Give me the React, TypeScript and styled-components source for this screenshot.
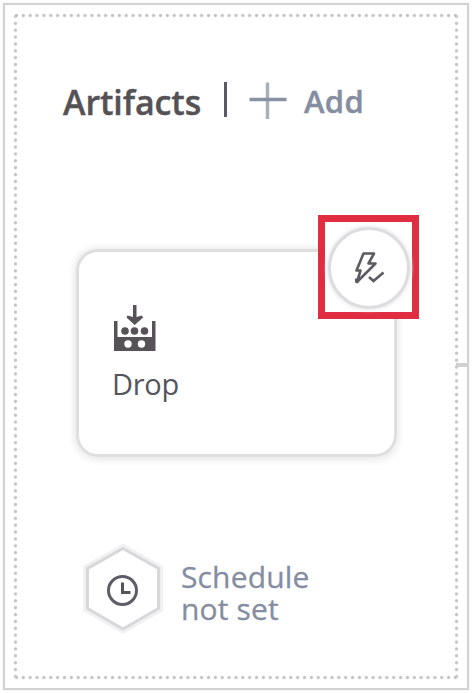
import React from "react";
import styled, { createGlobalStyle } from "styled-components";

const GlobalStyle = createGlobalStyle`
  *, *::before, *::after { box-sizing: border-box; }
  html, body { margin: 0; background: #fff; }
  body { font-family: "Open Sans", "Noto Sans", sans-serif; overflow: hidden; }
  svg { display: block; flex: none; }
`;

const Page = styled.main`
  width: 472px;
  height: 693px;
  padding: 3px;
  background: #fff;
`;

const Frame = styled.section`
  width: 466px;
  height: 687px;
  padding: 8px;
  border: 2px solid #d2d2d5;
  box-shadow: 0 0 2px #e6e6e8;
`;

const dot = "radial-gradient(circle at center, #c4c4c4 0 1px, #dcdcdc 1.6px, transparent 2.2px)";

const DottedPanel = styled.div`
  position: relative;
  width: 446px;
  height: 667px;
  padding: 69px 0 0 50px;
  background-image: ${dot}, ${dot}, ${dot}, ${dot};
  background-size: 6.9px 5px, 6.9px 5px, 5px 6.9px, 5px 6.9px;
  background-position: 0 0, 0 100%, 0 0, 100% 0;
  background-repeat: round no-repeat, round no-repeat, no-repeat round, no-repeat round;
`;

const Connector = styled.span`
  position: absolute;
  top: 350px;
  right: -8px;
  width: 11px;
  height: 4px;
  background: #d0d0d3;
`;

const Header = styled.header`
  display: flex;
  align-items: flex-start;
  height: 50px;
`;

const Title = styled.h1`
  width: 161px;
  margin: 0;
  font-size: 34px;
  line-height: 40px;
  font-weight: 600;
  letter-spacing: -0.1px;
  color: #555256;
  -webkit-text-stroke: 0.4px #555256;
`;

const Divider = styled.span`
  width: 3px;
  height: 35px;
  background: #5a5a61;
`;

const AddButton = styled.button`
  display: flex;
  align-items: flex-start;
  gap: 17px;
  margin: 0 0 0 22px;
  padding: 0;
  border: 0;
  background: none;
  color: #858da0;
  font: 600 31px/38px "Open Sans", sans-serif;
  letter-spacing: 0.3px;
  -webkit-text-stroke: 0.4px #858da0;
`;

const ArtifactCard = styled.article`
  position: relative;
  width: 321px;
  height: 208px;
  margin: 117px 0 0 13px;
  padding: 52px 0 0 33px;
  border: 3px solid #dfdfdf;
  border-radius: 22px;
  background: #fff;
  box-shadow: 0 1px 6px 3px #ececec;

  > svg { margin-left: 2px; }
`;

const CardName = styled.div`
  margin-top: 12px;
  font-size: 29px;
  line-height: 40px;
  letter-spacing: -0.3px;
  color: #55555d;
`;

const Highlight = styled.div`
  position: absolute;
  top: -37px;
  right: -25px;
  width: 101px;
  height: 104px;
  padding-top: 1px;
  display: grid;
  place-items: center;
  border: 7px solid #e02e40;
  background: #fff;
`;

const TriggerButton = styled.div`
  width: 82px;
  height: 82px;
  display: grid;
  place-items: center;
  border: 3px solid #dddcde;
  border-radius: 50%;
  background: #fff;
  box-shadow: 0 0 3px 2px #f0f0f0;
`;

const Schedule = styled.div`
  display: flex;
  gap: 18px;
  margin: 87px 0 0 20px;
`;

const ScheduleText = styled.p`
  width: 150px;
  margin: 17px 0 0;
  font-size: 30px;
  line-height: 32px;
  letter-spacing: 0.15px;
  color: #858da0;
  -webkit-text-stroke: 0.3px #858da0;
`;

const PlusIcon = () => (
  <svg width="38" height="38" viewBox="0 0 38 38">
    <path d="M18.5 .5V37" stroke="#a9afbb" strokeWidth="3.5" />
    <path d="M.5 17.5H37.5" stroke="#8992a5" strokeWidth="3.5" />
  </svg>
);

const DropIcon = () => (
  <svg width="42" height="48" viewBox="0 0 42 48" fill="#565257">
    <path d="M0 17H3.5V33H38V17H41.5V47H0Z" />
    <path d="M19 1H22.5V13L28 11.5 29 13.5 20.7 21 12.5 13.5 13.5 11.5 19 13Z" />
    <circle cx="11" cy="27" r="3.8" />
    <circle cx="20.5" cy="27" r="3.8" />
    <circle cx="30.5" cy="27" r="3.8" />
    <circle cx="14" cy="40" r="3.7" fill="#fff" />
    <circle cx="27.5" cy="40" r="3.7" fill="#fff" />
  </svg>
);

const TriggerIcon = () => (
  <svg width="34" height="36" viewBox="0 0 34 36" fill="none" stroke="#5c5a63" strokeWidth="2.6">
    <path d="M11.5 3.5H22L16.5 13.5H23.5L5 32L8.5 20.5H4.5Z" strokeLinejoin="round" />
    <path d="M3 28.5H7V32.5H3Z" fill="#5c5a63" stroke="none" />
    <path d="M17 27L21.5 31L31.5 22.5" />
  </svg>
);

const HexagonIcon = () => (
  <svg width="80" height="90" viewBox="0 0 80 90" fill="none">
    <path d="M40 3.5L76.5 24V65L40 86L3.5 65V24Z" stroke="#f1f1f1" strokeWidth="7" />
    <path d="M40 4.5L75.5 24.5V64.5L40 85L4.5 64.5V24.5Z" fill="#fff" stroke="#d8d8da" strokeWidth="3" />
    <circle cx="39.5" cy="46.5" r="14" stroke="#5d5d68" strokeWidth="3" />
    <path d="M39.5 38.5V48.5H47.5" stroke="#55535b" strokeWidth="3" />
  </svg>
);

export default function App() {
  return (
    <>
      <GlobalStyle />
      <Page>
        <Frame>
          <DottedPanel>
            <Connector />
            <Header>
              <Title>Artifacts</Title>
              <Divider />
              <AddButton>
                <PlusIcon />
                Add
              </AddButton>
            </Header>
            <ArtifactCard>
              <DropIcon />
              <CardName>Drop</CardName>
              <Highlight>
                <TriggerButton>
                  <TriggerIcon />
                </TriggerButton>
              </Highlight>
            </ArtifactCard>
            <Schedule>
              <HexagonIcon />
              <ScheduleText>
                Schedule
                <br />
                not set
              </ScheduleText>
            </Schedule>
          </DottedPanel>
        </Frame>
      </Page>
    </>
  );
}
